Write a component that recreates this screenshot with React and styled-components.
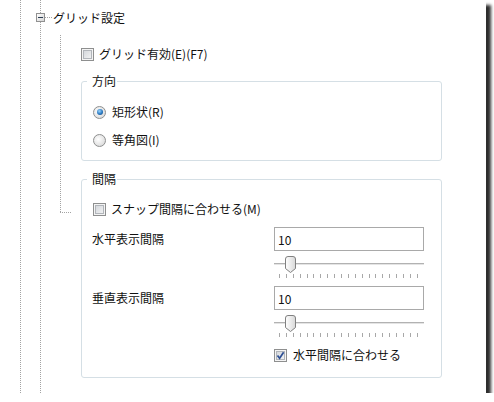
import React from 'react';
import styled, { createGlobalStyle } from 'styled-components';

const GlobalStyle = createGlobalStyle`
  html, body {
    margin: 0;
    padding: 0;
    background: #fff;
  }
  body {
    font-family: "Noto Sans CJK JP", "Noto Sans", sans-serif;
    font-size: 12px;
    color: #111;
  }
`;

// dotted tree guide drawn at a given x offset
const dotsV = (x) =>
  `linear-gradient(to bottom, #a3a3a3 50%, transparent 50%) ${x}px 0 / 1px 2px repeat-y`;
const dotsH = (y) =>
  `linear-gradient(to right, #a3a3a3 50%, transparent 50%) 0 ${y} / 2px 1px repeat-x`;

const Page = styled.div`
  display: flex;
  width: 486px;
  height: 393px;
  background: #fff;
  box-shadow: 5px 5px 3px #2e2e2e;
`;

const Rail = styled.div`
  flex: 0 0 21px;
  background: ${dotsV(20)};
`;

const Tree = styled.div`
  flex: 1;
  display: flex;
  flex-direction: column;
  background: ${dotsV(19)};
`;

const NodeHeader = styled.div`
  display: flex;
  align-items: center;
  height: 35px;
  padding-left: 15px;
`;

const Expander = styled.span`
  box-sizing: border-box;
  width: 9px;
  height: 9px;
  border: 1px solid #919191;
  background: linear-gradient(135deg, #ffffff, #d4d4d4);
  display: flex;
  align-items: center;
  justify-content: center;

  &::before {
    content: '';
    width: 5px;
    height: 1px;
    background: #2b3d52;
  }
`;

const Connector = styled.span`
  width: 7px;
  height: 1px;
  background: ${dotsH('0')};
`;

const NodeLabel = styled.span`
  margin-left: 1px;
  line-height: 16px;
`;

const NodeBody = styled.div`
  flex: 1;
  display: flex;
`;

const ChildRail = styled.div`
  flex: 0 0 60px;
  box-sizing: border-box;
  padding-left: 39px;
`;

const Elbow = styled.div`
  width: 11px;
  height: 178px;
  background: ${dotsV(0)}, ${dotsH('100%')};
`;

const Content = styled.div`
  width: 361px;
  display: flex;
  flex-direction: column;
  padding-top: 11px;
`;

const OptionRow = styled.label`
  display: flex;
  align-items: center;
  gap: ${(p) => p.$gap || 5}px;
  height: 16px;
  line-height: 16px;
  margin-left: ${(p) => p.$indent || 0}px;
  margin-top: ${(p) => p.$top || 0}px;
`;

const Box = styled.span`
  box-sizing: border-box;
  flex: 0 0 13px;
  height: 13px;
  border: 1px solid #8e8f8f;
  background: linear-gradient(135deg, #cdd1d6, #f8f8f8);
  box-shadow: inset 0 0 0 1px #f4f4f4, inset 0 0 0 2px #b1b5ba;
  display: flex;
  align-items: center;
  justify-content: center;
`;

const RadioDot = styled.span`
  box-sizing: border-box;
  flex: 0 0 13px;
  height: 13px;
  border-radius: 50%;
  border: 1px solid #8e8f8f;
  background: radial-gradient(circle at 40% 40%, #ffffff, #d2d2d2);
  display: flex;
  align-items: center;
  justify-content: center;

  &::after {
    content: '';
    display: ${(p) => (p.$on ? 'block' : 'none')};
    width: 6px;
    height: 6px;
    border-radius: 50%;
    background: radial-gradient(circle at 40% 35%, #9ad6ff, #2a78c0 55%, #123f73);
  }
`;

const Group = styled.section`
  margin-top: ${(p) => p.$top}px;
  padding: 0 10px ${(p) => p.$pb}px;
  border: 1px solid #d5dfe5;
  border-radius: 3px;
  display: flex;
  flex-direction: column;
`;

const GroupTitle = styled.span`
  align-self: flex-start;
  margin: -9px 0 0 -5px;
  padding: 0 1px 0 5px;
  line-height: 16px;
  background: #fff;
`;

const SettingGrid = styled.div`
  display: grid;
  grid-template-columns: 182px 150px;
  row-gap: 8px;
  margin-top: 10px;
`;

const SettingLabel = styled.span`
  height: 24px;
  line-height: 24px;
`;

const Control = styled.div`
  display: flex;
  flex-direction: column;
`;

const Field = styled.input`
  box-sizing: border-box;
  width: 150px;
  height: 24px;
  margin: 0;
  padding: 0 0 0 3px;
  border: 1px solid #a9a9a9;
  font: inherit;
  color: #111;
  background: #fff;
  outline: none;
`;

const TrackRow = styled.div`
  display: flex;
  height: 18px;
  margin-top: 5px;
  background: linear-gradient(
    to bottom,
    transparent 7px,
    #b2b2b2 7px,
    #b2b2b2 8px,
    #e4e4e4 8px,
    #e4e4e4 9px,
    transparent 9px
  );
`;

const Thumb = styled.svg`
  margin-left: 10px;
  width: 13px;
  height: 18px;
`;

const Ticks = styled.div`
  display: flex;
  justify-content: space-between;
  height: 4px;
  padding: 0 6px 0 5px;
`;

const Tick = styled.span`
  width: 1px;
  height: 4px;
  background: #a8a8a8;
`;

const CheckBox = ({ checked }) => (
  <Box>
    {checked && (
      <svg width="9" height="9" viewBox="0 0 9 9">
        <path d="M1.5 4.5 L3.6 7.2 L7.6 1.3" fill="none" stroke="#2d4f94" strokeWidth="1.7" />
      </svg>
    )}
  </Box>
);

const Slider = () => (
  <>
    <TrackRow>
      <Thumb viewBox="0 0 13 18">
        <defs>
          <linearGradient id="thumbFill" x1="0" y1="0" x2="1" y2="0">
            <stop offset="0" stopColor="#ffffff" />
            <stop offset="1" stopColor="#d8d8d8" />
          </linearGradient>
        </defs>
        <path
          d="M1.5 3 Q1.5 0.5 4 0.5 H9 Q11.5 0.5 11.5 3 V12.5 L6.5 16.5 L1.5 12.5 Z"
          fill="url(#thumbFill)"
          stroke="#808080"
        />
      </Thumb>
    </TrackRow>
    <Ticks>
      {Array.from({ length: 21 }, (_, i) => (
        <Tick key={i} />
      ))}
    </Ticks>
  </>
);

const App = () => (
  <>
    <GlobalStyle />
    <Page>
      <Rail />
      <Tree>
        <NodeHeader>
          <Expander />
          <Connector />
          <NodeLabel>グリッド設定</NodeLabel>
        </NodeHeader>
        <NodeBody>
          <ChildRail>
            <Elbow />
          </ChildRail>
          <Content>
            <OptionRow>
              <CheckBox />
              グリッド有効(E)(F7)
            </OptionRow>

            <Group $top={19} $pb={12}>
              <GroupTitle>方向</GroupTitle>
              <OptionRow $indent={1} $gap={6} $top={15}>
                <RadioDot $on />
                矩形状(R)
              </OptionRow>
              <OptionRow $indent={1} $gap={6} $top={12}>
                <RadioDot />
                等角図(I)
              </OptionRow>
            </Group>

            <Group $top={18} $pb={14}>
              <GroupTitle>間隔</GroupTitle>
              <OptionRow $indent={1} $gap={5} $top={14}>
                <CheckBox />
                スナップ間隔に合わせる(M)
              </OptionRow>
              <SettingGrid>
                <SettingLabel>水平表示間隔</SettingLabel>
                <Control>
                  <Field defaultValue="10" />
                  <Slider />
                </Control>
                <SettingLabel>垂直表示間隔</SettingLabel>
                <Control>
                  <Field defaultValue="10" />
                  <Slider />
                </Control>
                <span />
                <OptionRow $top={2} $gap={6}>
                  <CheckBox checked />
                  水平間隔に合わせる
                </OptionRow>
              </SettingGrid>
            </Group>
          </Content>
        </NodeBody>
      </Tree>
    </Page>
  </>
);

export default App;
